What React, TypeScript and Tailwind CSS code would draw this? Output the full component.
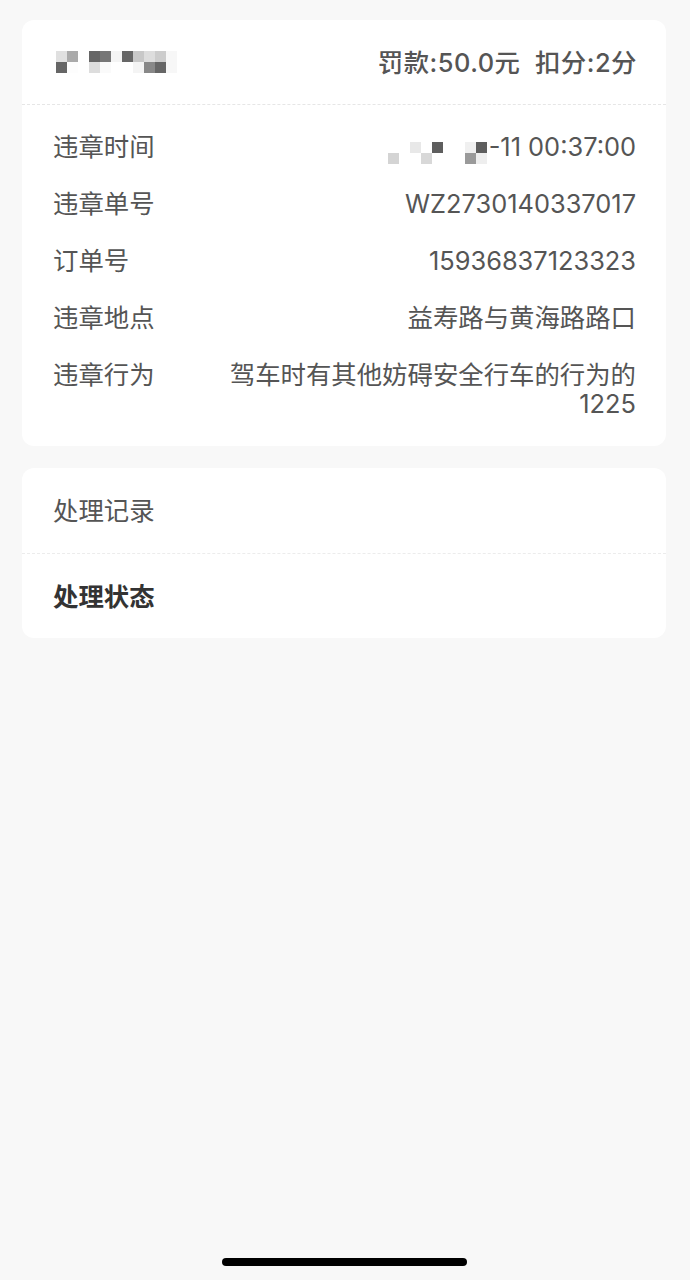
import React from 'react';

const FONT = { fontFamily: 'Inter, "Noto Sans CJK SC", sans-serif' };

// 打码的车牌号
const plateBlocks = [
  ['#e0e0e0', '#aaaaaa', null, '#666666', '#777777', '#f4f4f4', '#666666', '#c8c8c8', '#dddddd', '#cccccc', '#f7f7f7'],
  ['#666666', '#fdfdfd', null, '#dddddd', '#fafafa', null, null, '#f4f4f4', '#888888', '#666666', '#f7f7f7'],
];

// 打码的日期
const dateBlocks = [
  [null, null, '#e8e8e8', null, '#5e5e5e', null, null, '#f0f0f0', '#5e5e5e'],
  ['#d4d4d4', null, null, '#d8d8d8', null, null, null, '#9a9a9a', '#eeeeee'],
];

function Mosaic({ rows, size = 11 }: { rows: (string | null)[][]; size?: number }) {
  return (
    <div className="flex flex-col">
      {rows.map((row, i) => (
        <div key={i} className="flex">
          {row.map((c, j) => (
            <div key={j} style={{ width: size, height: size, background: c ?? 'transparent' }} />
          ))}
        </div>
      ))}
    </div>
  );
}

function Row({ label, children }: { label: string; children: React.ReactNode }) {
  return (
    <div className="flex items-start justify-between gap-6">
      <span className="shrink-0 text-[#555555]">{label}</span>
      <div className="text-right text-[#555555]">{children}</div>
    </div>
  );
}

export default function App() {
  return (
    <div className="min-h-[1280px] bg-[#f8f8f8] pt-[20px] relative" style={FONT}>
      <div className="ml-[22px] w-[644px] rounded-[12px] bg-white text-[25.4px] leading-[29px]">
        <div className="flex items-center justify-between pl-[31px] pr-[29px] h-[84px]">
          <div className="pl-[3px]">
            <Mosaic rows={plateBlocks} />
          </div>
          <span className="font-medium text-[#555555] tracking-[0.5px]">罚款:50.0元&nbsp;&nbsp;扣分:2分</span>
        </div>
        <div className="border-t border-dashed border-[#e6e6e6]" />
        <div className="flex flex-col gap-[28px] pl-[31px] pr-[30px] pt-[27px] pb-[28px]">
          <Row label="违章时间">
            <div className="flex h-[29px] items-start justify-end">
              <div className="mt-[10px] mr-[2px]">
                <Mosaic rows={dateBlocks} />
              </div>
              <span>-11 00:37:00</span>
            </div>
          </Row>
          <Row label="违章单号">WZ2730140337017</Row>
          <Row label="订单号">15936837123323</Row>
          <Row label="违章地点">益寿路与黄海路路口</Row>
          <Row label="违章行为">驾车时有其他妨碍安全行车的行为的<br />1225</Row>
        </div>
      </div>

      <div className="ml-[22px] mt-[22px] w-[644px] rounded-[12px] bg-white text-[25.4px] leading-[29px]">
        <div className="flex items-center h-[85px] px-[31px] text-[#555555]">处理记录</div>
        <div className="border-t border-dashed border-[#ececec]" />
        <div className="flex items-center h-[84px] px-[31px] font-semibold text-[#333333]">处理状态</div>
      </div>

      <div className="absolute left-[222px] top-[1258px] h-[8px] w-[245px] rounded-full bg-black" />
    </div>
  );
}
